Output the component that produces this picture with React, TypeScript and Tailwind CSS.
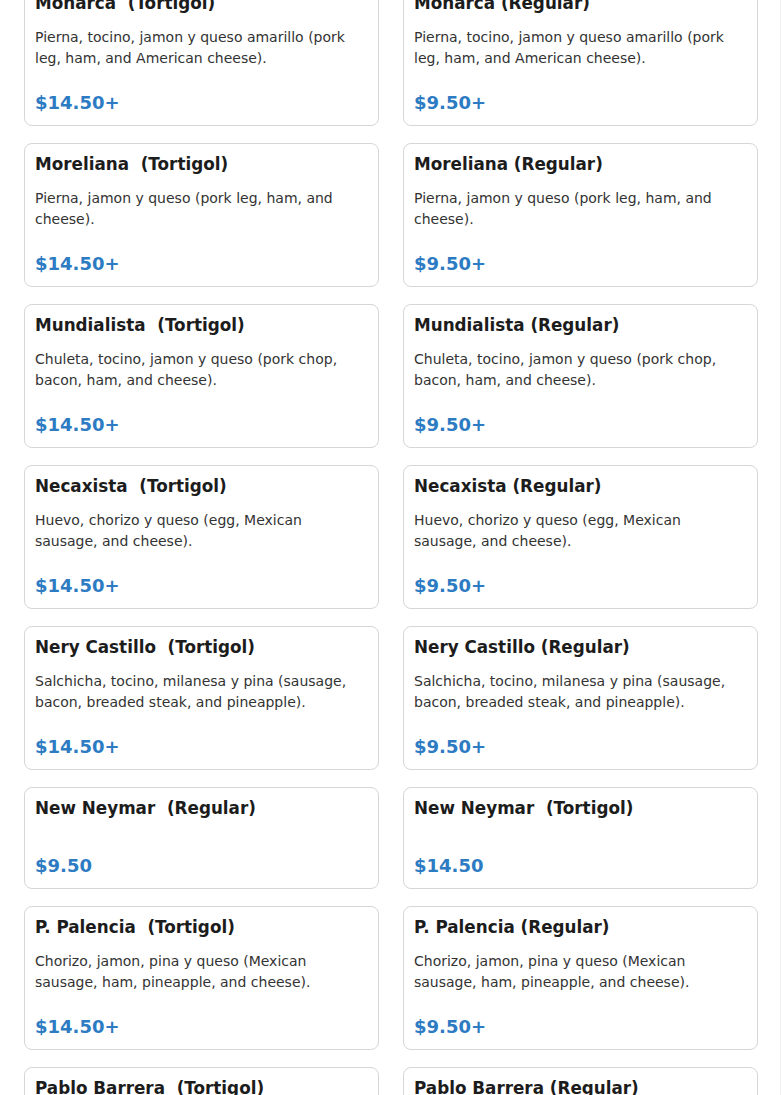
type Item = {
  name: string;
  kind: string;
  desc: string;
  price: string;
};

const rows: [Item, Item][] = [
  [
    { name: "Monarca", kind: " (Tortigol)", desc: "Pierna, tocino, jamon y queso amarillo (pork leg, ham, and American cheese).", price: "$14.50+" },
    { name: "Monarca", kind: "(Regular)", desc: "Pierna, tocino, jamon y queso amarillo (pork leg, ham, and American cheese).", price: "$9.50+" },
  ],
  [
    { name: "Moreliana", kind: " (Tortigol)", desc: "Pierna, jamon y queso (pork leg, ham, and cheese).", price: "$14.50+" },
    { name: "Moreliana", kind: "(Regular)", desc: "Pierna, jamon y queso (pork leg, ham, and cheese).", price: "$9.50+" },
  ],
  [
    { name: "Mundialista", kind: " (Tortigol)", desc: "Chuleta, tocino, jamon y queso (pork chop, bacon, ham, and cheese).", price: "$14.50+" },
    { name: "Mundialista", kind: "(Regular)", desc: "Chuleta, tocino, jamon y queso (pork chop, bacon, ham, and cheese).", price: "$9.50+" },
  ],
  [
    { name: "Necaxista", kind: " (Tortigol)", desc: "Huevo, chorizo y queso (egg, Mexican sausage, and cheese).", price: "$14.50+" },
    { name: "Necaxista", kind: "(Regular)", desc: "Huevo, chorizo y queso (egg, Mexican sausage, and cheese).", price: "$9.50+" },
  ],
  [
    { name: "Nery Castillo", kind: " (Tortigol)", desc: "Salchicha, tocino, milanesa y pina (sausage, bacon, breaded steak, and pineapple).", price: "$14.50+" },
    { name: "Nery Castillo", kind: "(Regular)", desc: "Salchicha, tocino, milanesa y pina (sausage, bacon, breaded steak, and pineapple).", price: "$9.50+" },
  ],
  [
    { name: "New Neymar", kind: " (Regular)", desc: "", price: "$9.50" },
    { name: "New Neymar", kind: " (Tortigol)", desc: "", price: "$14.50" },
  ],
  [
    { name: "P. Palencia", kind: " (Tortigol)", desc: "Chorizo, jamon, pina y queso (Mexican sausage, ham, pineapple, and cheese).", price: "$14.50+" },
    { name: "P. Palencia", kind: "(Regular)", desc: "Chorizo, jamon, pina y queso (Mexican sausage, ham, pineapple, and cheese).", price: "$9.50+" },
  ],
  [
    { name: "Pablo Barrera", kind: " (Tortigol)", desc: "Pierna, tocino, jamon y queso.", price: "$14.50+" },
    { name: "Pablo Barrera", kind: "(Regular)", desc: "Pierna, tocino, jamon y queso.", price: "$9.50+" },
  ],
];

function MenuCard({ item }: { item: Item }) {
  return (
    <div className="flex flex-col rounded-[8px] border border-[#d6d6d6] bg-white px-[10px] pt-[7px] pb-[9px]">
      <h3 className="whitespace-pre text-[16.8px] font-bold leading-[27px] text-[#1c1c1c]">
        {item.name} {item.kind}
      </h3>
      <p className="mt-[10px] text-[14px] leading-[21px] text-[#333333]">{item.desc}</p>
      <p className="mt-[20px] text-[18px] font-bold leading-[27px] text-[#2c7bc3]">{item.price}</p>
    </div>
  );
}

export default function App() {
  return (
    <div
      className="h-[1095px] w-[781px] overflow-hidden border-r border-[#efefef] bg-white"
      style={{ fontFamily: '"DejaVu Sans", Verdana, sans-serif' }}
    >
      <div className="mt-[-18px] grid grid-cols-[355px_355px] gap-x-[24px] gap-y-[17px] pl-[24px]">
        {rows.flatMap((pair, i) =>
          pair.map((item, j) => <MenuCard key={`${i}-${j}`} item={item} />)
        )}
      </div>
    </div>
  );
}
